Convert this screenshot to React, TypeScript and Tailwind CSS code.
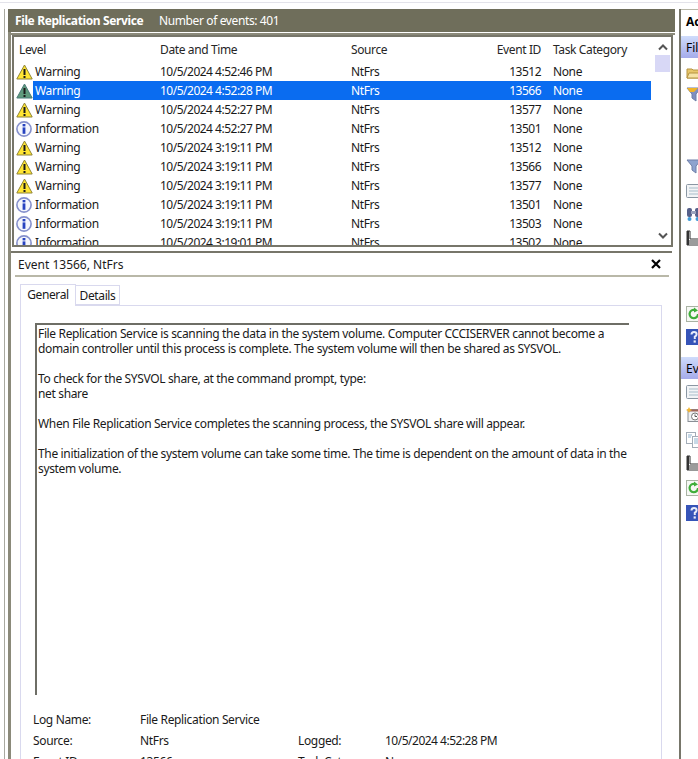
const font = "font-['Open_Sans','Noto_Sans',sans-serif]";

type Row = { level: "Warning" | "Information"; date: string; id: string; selected?: boolean };

const rows: Row[] = [
  { level: "Warning", date: "10/5/2024 4:52:46 PM", id: "13512" },
  { level: "Warning", date: "10/5/2024 4:52:28 PM", id: "13566", selected: true },
  { level: "Warning", date: "10/5/2024 4:52:27 PM", id: "13577" },
  { level: "Information", date: "10/5/2024 4:52:27 PM", id: "13501" },
  { level: "Warning", date: "10/5/2024 3:19:11 PM", id: "13512" },
  { level: "Warning", date: "10/5/2024 3:19:11 PM", id: "13566" },
  { level: "Warning", date: "10/5/2024 3:19:11 PM", id: "13577" },
  { level: "Information", date: "10/5/2024 3:19:11 PM", id: "13501" },
  { level: "Information", date: "10/5/2024 3:19:11 PM", id: "13503" },
  { level: "Information", date: "10/5/2024 3:19:01 PM", id: "13502" },
];

function WarningIcon({ selected }: { selected?: boolean }) {
  return (
    <svg width="17" height="16" viewBox="0 0 17 16" className="shrink-0">
      <path
        d="M8.5 1 L16.2 15 L0.8 15 Z"
        fill={selected ? "#5f9a7c" : "#ffe533"}
        stroke={selected ? "#4b7a78" : "#8f8436"}
        strokeWidth="1"
        strokeLinejoin="round"
      />
      <rect x="7.5" y="5" width="2" height="6" fill="#1a1a1a" />
      <rect x="7.5" y="12" width="2" height="2" fill="#1a1a1a" />
    </svg>
  );
}

function InfoIcon() {
  return (
    <svg width="16" height="16" viewBox="0 0 16 16" className="shrink-0">
      <circle cx="8" cy="8" r="7.1" fill="#f4f6fd" stroke="#8590cc" strokeWidth="1.6" />
      <rect x="6.6" y="3" width="2.8" height="2.4" fill="#2743c0" />
      <rect x="6.6" y="6.4" width="2.8" height="6.4" fill="#2743c0" />
    </svg>
  );
}

function Chevron({ down }: { down?: boolean }) {
  return (
    <svg width="10" height="7" viewBox="0 0 10 7">
      <path d={down ? "M1 1.5 L5 5.5 L9 1.5" : "M1 5.5 L5 1.5 L9 5.5"} fill="none" stroke="#555" strokeWidth="2" />
    </svg>
  );
}

function ActionIcon({ kind }: { kind: string }) {
  if (kind === "open")
    return (
      <svg width="16" height="16" viewBox="0 0 16 16">
        <path d="M1 4 H6 L7 5 H14 V13 H1 Z" fill="#e8c66a" stroke="#b59340" />
        <path d="M3 8 H15 L13 13 H1 Z" fill="#f6e3a6" stroke="#b59340" />
      </svg>
    );
  if (kind === "filter")
    return (
      <svg width="16" height="16" viewBox="0 0 16 16">
        <path d="M1 2 H15 L10 8 V15 L6 12 V8 Z" fill={"#8ea3cf"} stroke="#6f7fa8" />
      </svg>
    );
  if (kind === "filterstar")
    return (
      <svg width="16" height="16" viewBox="0 0 16 16">
        <path d="M1 2 H15 L10 8 V15 L6 12 V8 Z" fill="#7f8fbf" stroke="#6f7fa8" />
        <path d="M1 2 H12 L8 6 H4 Z" fill="#f0b429" />
      </svg>
    );
  if (kind === "props")
    return (
      <svg width="16" height="16" viewBox="0 0 16 16">
        <rect x="0.5" y="1.5" width="15" height="13" rx="1" fill="#f2f4f6" stroke="#8a97a3" />
        <path d="M3 5 H12 M3 8 H12 M3 11 H12" stroke="#a8bdca" />
      </svg>
    );
  if (kind === "find")
    return (
      <svg width="16" height="16" viewBox="0 0 16 16">
        <rect x="1" y="2" width="5" height="9" rx="2" fill="#56608a" />
        <rect x="9" y="2" width="5" height="9" rx="2" fill="#56608a" />
        <rect x="5" y="5" width="5" height="3" fill="#9aa2bd" />
        <circle cx="3.5" cy="13" r="2" fill="#3f9bd8" />
        <circle cx="11.5" cy="13" r="2" fill="#3f9bd8" />
      </svg>
    );
  if (kind === "save")
    return (
      <svg width="16" height="16" viewBox="0 0 16 16">
        <path d="M1 1 V15 H15 V9 H4 V1 Z" fill="#fff" stroke="#333" />
        <rect x="1" y="10" width="14" height="5" fill="#9b9b9b" />
        <rect x="1" y="1" width="2" height="14" fill="#333" />
      </svg>
    );
  if (kind === "refresh")
    return (
      <svg width="16" height="16" viewBox="0 0 16 16">
        <rect x="0.5" y="0.5" width="15" height="15" fill="#f6f8f4" stroke="#a9b3a4" />
        <path d="M12 8 A4.2 4.2 0 1 1 9 4" fill="none" stroke="#3fae3a" strokeWidth="2.2" />
        <path d="M8 1.5 L12 4.5 L8 6.5 Z" fill="#3fae3a" />
      </svg>
    );
  if (kind === "help")
    return (
      <svg width="16" height="16" viewBox="0 0 16 16">
        <rect width="16" height="16" fill="#3654b8" />
        <path d="M5.5 5.5 Q5.5 3 8 3 Q10.6 3 10.6 5.2 Q10.6 6.8 8.8 7.6 L8.8 10" fill="none" stroke="#e8ecfa" strokeWidth="2" />
        <rect x="7.6" y="11.4" width="2.2" height="2.2" fill="#e8ecfa" />
      </svg>
    );
  if (kind === "clock")
    return (
      <svg width="16" height="16" viewBox="0 0 16 16">
        <rect x="2" y="2.5" width="13" height="12" fill="#eef0f2" stroke="#8a8f96" />
        <rect x="2" y="2.5" width="13" height="2" fill="#a0665a" />
        <circle cx="9" cy="9.5" r="3.5" fill="#fff" stroke="#777" />
        <path d="M9 7.5 V9.5 H11" fill="none" stroke="#555" />
        <path d="M3 0 L4 2 L6 3 L4 4 L3 6 L2 4 L0 3 L2 2 Z" fill="#f2b632" />
      </svg>
    );
  // copy
  return (
    <svg width="16" height="16" viewBox="0 0 16 16">
      <rect x="0.5" y="0.5" width="9" height="11" fill="#fff" stroke="#a3adb8" />
      <rect x="6.5" y="4.5" width="9" height="11" fill="#fff" stroke="#a3adb8" />
      <path d="M8 7 H14 M8 9 H14 M8 11 H14 M2 3 H6 M2 5 H5" stroke="#8fb3cf" />
    </svg>
  );
}

function ActionSlot({ kind, top }: { kind: string; top: number }) {
  return (
    <div className="pl-[5px]" style={{ marginTop: top }}>
      <ActionIcon kind={kind} />
    </div>
  );
}

export default function App() {
  return (
    <div className={`${font} w-[698px] h-[759px] overflow-hidden bg-white text-[12px] leading-[15px] text-[#1a1a1a] flex flex-col`}>
      <div className="h-[3px] shrink-0 border-b border-[#e3e3ea] bg-white" />
      <div className="flex flex-1 min-h-0 pt-[6px]">
        {/* left edge of the console tree */}
        <div className="w-[5px] shrink-0 border-r border-[#a9a9a0]" />

        <div className="w-[667px] shrink-0 ml-[3px] flex flex-col min-h-0">
          <div className="h-[23px] shrink-0 bg-[#6f6e5b] text-white flex items-center pl-[7px] tracking-[-0.38px]">
            <span className="font-bold w-[144px] whitespace-nowrap">File Replication Service</span>
            <span>Number of events: 401</span>
          </div>

          <div className="flex-1 min-h-0 flex flex-col border-l-[3px] border-[#8b8a7a] bg-white">
            <div className="h-[1px] shrink-0 bg-white" />
            <div className="h-[2px] shrink-0 bg-[#8b8a7a]" />
            {/* event list */}
            <div className="h-[212px] shrink-0 ml-[1px] mr-[2px] border-2 border-[#77766a] bg-white relative overflow-hidden tracking-[-0.38px]">
              <div className="h-[25px] flex items-center pb-[1px] text-[#262626]">
                <span className="w-[146px] pl-[5px]">Level</span>
                <span className="w-[191px]">Date and Time</span>
                <span className="w-[100px]">Source</span>
                <span className="w-[90px] text-right">Event ID</span>
                <span className="pl-[12px]">Task Category</span>
              </div>
              {rows.map((r) => (
                <div key={r.date + r.id} className="h-[19px] flex items-center">
                  <div className="w-[19px] pl-[2px] shrink-0">
                    {r.level === "Warning" ? <WarningIcon selected={r.selected} /> : <InfoIcon />}
                  </div>
                  <div className={`w-[618px] h-full flex items-center ${r.selected ? "bg-[#0a6cf0] text-white" : ""}`}>
                    <span className="w-[127px] pl-[2px]">{r.level}</span>
                    <span className="w-[191px] tracking-[-0.5px]">{r.date}</span>
                    <span className="w-[100px]">NtFrs</span>
                    <span className="w-[90px] text-right tracking-[-0.5px]">{r.id}</span>
                    <span className="pl-[12px]">None</span>
                  </div>
                </div>
              ))}
              {/* scrollbar */}
              <div className="absolute right-0 top-0 bottom-0 w-[17px] bg-white flex flex-col items-center">
                <div className="h-[17px] flex items-center justify-center pt-[4px]">
                  <Chevron />
                </div>
                <div className="w-[15px] h-[17px] bg-[#d8d8f6] mt-[1px]" />
                <div className="flex-1" />
                <div className="h-[17px] flex items-center justify-center pb-[2px]">
                  <Chevron down />
                </div>
              </div>
            </div>

            {/* event detail */}
            <div className="flex-1 min-h-0 mt-[4px] mr-[3px] bg-white border-t-2 border-[#77766a] overflow-hidden">
              <div className="h-[22px] flex items-center justify-between pl-[7px] pr-[11px]">
                <span>Event 13566, NtFrs</span>
                <svg width="10" height="10" viewBox="0 0 10 10">
                  <path d="M1 1 L9 9 M9 1 L1 9" stroke="#000" strokeWidth="2.2" />
                </svg>
              </div>
              <div className="h-[2px] bg-[#b9b8a8] mr-[3px] ml-[4px]" />
              <div className="pl-[9px] pr-[10px] pt-[6px]">
                <div className="flex items-end h-[22px] tracking-[-0.38px]">
                  <div className="w-[56px] h-[22px] border border-b-0 border-[#d9d9ee] bg-white flex items-center justify-center pb-[3px] relative z-10 -mb-px">
                    General
                  </div>
                  <div className="w-[44px] h-[20px] border border-l-0 border-[#d9d9ee] flex items-center justify-center">
                    Details
                  </div>
                </div>
                <div className="border-l border-t border-r border-[#d9d9ee] h-[460px] pl-[14px] pr-[32px] pt-[17px]">
                  <div className="h-[372px] border-l-2 border-t-2 border-[#6e6e66] pl-[1px] pt-[1px] tracking-[-0.35px]">
                    <p>
                      File Replication Service is scanning the data in the system volume. Computer CCCISERVER cannot become a domain controller until this process is complete. The system volume will then be shared as SYSVOL.
                    </p>
                    <p className="mt-[15px]">To check for the SYSVOL share, at the command prompt, type:</p>
                    <p>net share</p>
                    <p className="mt-[15px]">When File Replication Service completes the scanning process, the SYSVOL share will appear.</p>
                    <p className="mt-[15px]">
                      The initialization of the system volume can take some time. The time is dependent on the amount of data in the system volume.
                    </p>
                  </div>
                  <div className="mt-[17px] -ml-[2px] flex flex-col gap-[6px] tracking-[-0.35px]">
                    <div className="flex">
                      <span className="w-[107px]">Log Name:</span>
                      <span>File Replication Service</span>
                    </div>
                    <div className="flex">
                      <span className="w-[107px]">Source:</span>
                      <span className="w-[158px]">NtFrs</span>
                      <span className="w-[87px]">Logged:</span>
                      <span className="tracking-[-0.5px]">10/5/2024 4:52:28 PM</span>
                    </div>
                    <div className="flex">
                      <span className="w-[107px]">Event ID:</span>
                      <span className="w-[158px]">13566</span>
                      <span className="w-[87px]">Task Category:</span>
                      <span>None</span>
                    </div>
                  </div>
                </div>
              </div>
            </div>
          </div>
        </div>

        {/* actions pane */}
        <div className="flex-1 ml-[4px] border-l-2 border-[#77766a] bg-white overflow-hidden whitespace-nowrap">
          <div className="h-[23px] flex items-center pl-[5px] font-bold text-black border-t border-[#b9b8a8]">Actions</div>
          <div className="mt-[4px] h-[22px] bg-gradient-to-b from-[#cfdcfb] to-[#a5abea] flex items-center pl-[5px] text-black">File Replication</div>
          <ActionSlot kind="open" top={7} />
          <ActionSlot kind="filterstar" top={5} />
          <ActionSlot kind="filter" top={56} />
          <ActionSlot kind="props" top={9} />
          <ActionSlot kind="find" top={7} />
          <ActionSlot kind="save" top={8} />
          <ActionSlot kind="refresh" top={60} />
          <ActionSlot kind="help" top={7} />
          <div className="mt-[12px] h-[22px] bg-gradient-to-b from-[#cfdcfb] to-[#a5abea] flex items-center pl-[5px] text-black">Event 13566</div>
          <ActionSlot kind="props" top={5} />
          <ActionSlot kind="clock" top={7} />
          <ActionSlot kind="copy" top={9} />
          <ActionSlot kind="save" top={7} />
          <ActionSlot kind="refresh" top={9} />
          <ActionSlot kind="help" top={9} />
        </div>
      </div>
    </div>
  );
}
